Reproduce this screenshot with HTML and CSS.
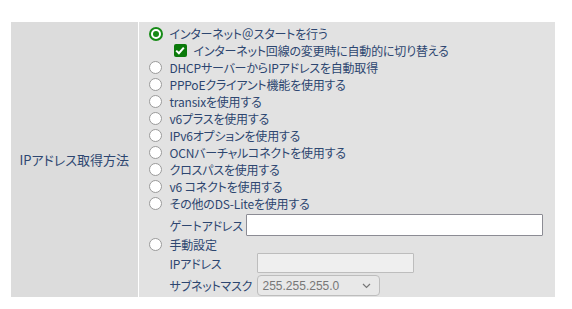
FILE: index.html
```html
<!DOCTYPE html>
<html lang="ja">
<head>
  <meta charset="UTF-8" />
  <title>IPアドレス取得方法</title>
  <link rel="stylesheet" href="styles.css">
</head>
<body>
  <table class="setting-table">
    <tr>
      <th class="setting-label">IPアドレス取得方法</th>
      <td class="setting-value">
        <label class="opt">
          <span class="radio checked"></span>インターネット＠スタートを行う
        </label>
        <label class="opt sub">
          <span class="check"><svg width="10" height="9" viewBox="0 0 10 9"><path d="M1.2 4.6 L3.9 7.2 L8.8 1.6" fill="none" stroke="#fff" stroke-width="2"/></svg></span>インターネット回線の変更時に自動的に切り替える
        </label>
        <label class="opt"><span class="radio"></span>DHCPサーバーからIPアドレスを自動取得</label>
        <label class="opt"><span class="radio"></span>PPPoEクライアント機能を使用する</label>
        <label class="opt"><span class="radio"></span>transixを使用する</label>
        <label class="opt"><span class="radio"></span>v6プラスを使用する</label>
        <label class="opt"><span class="radio"></span>IPv6オプションを使用する</label>
        <label class="opt"><span class="radio"></span>OCNバーチャルコネクトを使用する</label>
        <label class="opt"><span class="radio"></span>クロスパスを使用する</label>
        <label class="opt"><span class="radio"></span>v6 コネクトを使用する</label>
        <label class="opt"><span class="radio"></span>その他のDS-Liteを使用する</label>
        <div class="field gate">
          <span class="field-name">ゲートアドレス</span>
          <input type="text" class="text-input wide">
        </div>
        <label class="opt"><span class="radio"></span>手動設定</label>
        <div class="field">
          <span class="field-name long">IPアドレス</span>
          <input type="text" class="text-input short" disabled>
        </div>
        <div class="field mask">
          <span class="field-name long">サブネットマスク</span>
          <div class="select">
            <span>255.255.255.0</span>
            <svg width="9" height="6" viewBox="0 0 9 6"><path d="M1 1 L4.5 4.5 L8 1" fill="none" stroke="#777" stroke-width="1.2"/></svg>
          </div>
        </div>
      </td>
    </tr>
  </table>
</body>
</html>
```

FILE: styles.css
```css
* {
  box-sizing: border-box;
  margin: 0;
  padding: 0;
}
body {
  background: #fff;
  font-family: "Noto Sans CJK JP", "Noto Sans", sans-serif;
  font-size: 12px;
  color: #2d4670;
  padding: 22px 0 0 11px;
  font-feature-settings: "palt";
  letter-spacing: -0.2px;
}

/* 設定テーブル */
.setting-table {
  width: 544px;
  border-collapse: collapse;
}
.setting-label {
  width: 127px;
  background: #dcdcdc;
  border-right: 1px solid #fff;
  font-weight: normal;
  font-size: 13px;
  letter-spacing: 0;
  text-align: center;
  vertical-align: middle;
}
.setting-value {
  background: #e2e2e2;
  padding: 3px 0 1px 10px;
  vertical-align: top;
}

/* ラジオ・チェック */
.opt {
  display: flex;
  align-items: center;
  height: 17px;
  line-height: 17px;
}
.opt.sub {
  padding-left: 25px;
}
.radio {
  width: 13px;
  height: 13px;
  border: 1px solid #9a9a9a;
  border-radius: 50%;
  background: #fff;
  margin-right: 8px;
  flex: none;
}
.radio.checked {
  width: 14px;
  height: 14px;
  margin-right: 7px;
  border: 2px solid #168a16;
  position: relative;
}
.radio.checked::after {
  content: "";
  position: absolute;
  left: 2px;
  top: 2px;
  width: 6px;
  height: 6px;
  border-radius: 50%;
  background: #168a16;
}
.check {
  width: 13px;
  height: 13px;
  background: #0b7a0b;
  border-radius: 2px;
  display: flex;
  align-items: center;
  justify-content: center;
  margin-right: 7px;
  flex: none;
}

/* 入力欄 */
.field {
  display: flex;
  align-items: center;
  padding-left: 21px;
  height: 20px;
}
.field.gate {
  margin-top: 2px;
  height: 22px;
}
.field.mask {
  margin-top: 2px;
  height: 21px;
}
.field-name {
  width: 76px;
  flex: none;
}
.field-name.long {
  width: 87px;
}
.text-input {
  height: 100%;
  border: 1px solid #8c8c94;
  border-radius: 1px;
  background: #fff;
  outline: none;
}
.text-input.wide {
  width: 297px;
}
.text-input.short {
  width: 157px;
  border-color: #bdbdbd;
  background: #efefef;
}
.select {
  width: 123px;
  height: 100%;
  border: 1px solid #bdbdbd;
  border-radius: 4px;
  background: #e8e8e8;
  display: flex;
  align-items: center;
  justify-content: space-between;
  padding: 0 8px 0 5px;
  font-family: "Liberation Sans", Arial, sans-serif;
  font-size: 12px;
  letter-spacing: 0;
  color: #777;
}
```
